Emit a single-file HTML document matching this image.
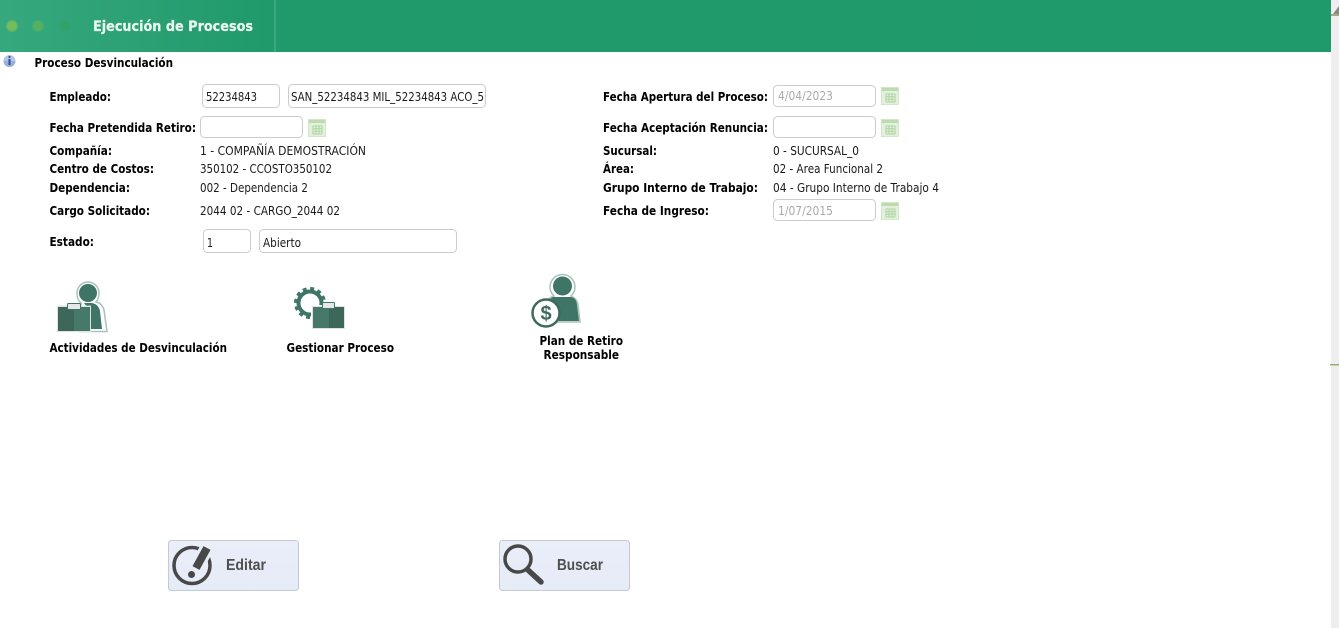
<!DOCTYPE html>
<html lang="es"><head><meta charset="utf-8"><title>Ejecución de Procesos</title>
<style>
html,body{margin:0;padding:0;background:#fff;width:1339px;height:628px;overflow:hidden}
svg{display:block}
text{font-family:"DejaVu Sans","Liberation Sans",sans-serif;font-size:12px;fill:#1a1a1a}
.b{font-weight:bold;fill:#000;font-size:12.5px}
.d{fill:#aaa}
.btn{font-family:"Liberation Sans",sans-serif;font-weight:bold;font-size:16px;fill:#4f4f4f}
.f{fill:#fff;stroke:#ccc;stroke-width:1}
</style></head><body>
<svg width="1339" height="628" viewBox="0 0 1339 628" xmlns="http://www.w3.org/2000/svg">
<defs>
<linearGradient id="h" x1="0" y1="0" x2="1" y2="0"><stop offset="0" stop-color="#37a87e"/><stop offset=".2" stop-color="#209a6b"/><stop offset="1" stop-color="#1f9a6b"/></linearGradient>
<linearGradient id="btn" x1="0" y1="0" x2="0" y2="1"><stop offset="0" stop-color="#e9eef9"/><stop offset="1" stop-color="#e6ebf8"/></linearGradient>
<filter id="soft" x="-50%" y="-50%" width="200%" height="200%"><feGaussianBlur stdDeviation="0.8"/></filter>
<g id="cal"><rect x="0.5" y="0.5" width="17" height="17" fill="#e3f0dc" stroke="#d2e6c8"/><rect x="1" y="1" width="16" height="3" fill="#bcdcb0"/><path d="M5 7h9v8H5zM5 9.700h9M5 12.300h9M8 7v8M11 7v8" fill="none" stroke="#aed4a2" stroke-width="1"/></g>
</defs>

<rect x="0" y="0" width="1331" height="52" fill="url(#h)"/>
<rect x="274" y="0" width="2" height="52" fill="#3aa981"/>
<g filter="url(#soft)">
<circle cx="12" cy="26" r="5.5" fill="#74bd5c"/>
<circle cx="38" cy="26" r="5.5" fill="#55b064"/>
<circle cx="65" cy="26" r="5.5" fill="#32a26b"/>
</g>
<text x="93" y="31" class="b" style="font-size:14.500px;fill:#eaf6f0;stroke:#eaf6f0;stroke-width:.25" textLength="160" lengthAdjust="spacingAndGlyphs">Ejecución de Procesos</text>

<rect x="1331" y="0" width="8" height="628" fill="#eeeeee"/>
<path d="M1333 14L1339 6V14z" fill="#888"/>
<rect x="1331" y="14" width="8" height="2" fill="#a6a888"/>
<rect x="1330" y="364" width="9" height="1.500" fill="#9aaa78"/>

<circle cx="9.500" cy="61" r="6" fill="#b4c6e4"/><path d="M3.500 61a6 6 0 0 0 12 0z" fill="#9ab0da"/><rect x="8.500" y="59" width="2" height="6" fill="#2b4f9e"/><circle cx="9.500" cy="57" r="1.100" fill="#2b4f9e"/>
<text x="34.500" y="67" class="b" textLength="138.500" lengthAdjust="spacingAndGlyphs">Proceso Desvinculación</text>

<text x="49.500" y="101" class="b" textLength="61.500" lengthAdjust="spacingAndGlyphs">Empleado:</text>
<rect x="202.500" y="84.500" width="77" height="23" rx="4" class="f"/>
<text x="206" y="101" textLength="51" lengthAdjust="spacingAndGlyphs">52234843</text>
<rect x="288.500" y="84.500" width="197" height="23" rx="4" class="f"/>
<text x="291" y="101" textLength="193" lengthAdjust="spacingAndGlyphs">SAN_52234843 MIL_52234843 ACO_5</text>

<text x="49.500" y="132" class="b" textLength="146.500" lengthAdjust="spacingAndGlyphs">Fecha Pretendida Retiro:</text>
<rect x="200.500" y="116.500" width="102" height="21" rx="4" class="f"/>
<use href="#cal" x="308" y="119"/>

<text x="49.500" y="155" class="b" textLength="62.500" lengthAdjust="spacingAndGlyphs">Compañía:</text>
<text x="200" y="155" textLength="166" lengthAdjust="spacingAndGlyphs">1 - COMPAÑÍA DEMOSTRACIÓN</text>
<text x="49.500" y="173" class="b" textLength="104.500" lengthAdjust="spacingAndGlyphs">Centro de Costos:</text>
<text x="200" y="173" textLength="132" lengthAdjust="spacingAndGlyphs">350102 - CCOSTO350102</text>
<text x="49.500" y="192" class="b" textLength="80.500" lengthAdjust="spacingAndGlyphs">Dependencia:</text>
<text x="200" y="192" textLength="108" lengthAdjust="spacingAndGlyphs">002 - Dependencia 2</text>
<text x="49.500" y="215" class="b" textLength="100.500" lengthAdjust="spacingAndGlyphs">Cargo Solicitado:</text>
<text x="200" y="215" textLength="140" lengthAdjust="spacingAndGlyphs">2044 02 - CARGO_2044 02</text>

<text x="49.500" y="246" class="b" textLength="44.500" lengthAdjust="spacingAndGlyphs">Estado:</text>
<rect x="203.500" y="229.500" width="47" height="23" rx="4" class="f"/>
<text x="207" y="247" textLength="6" lengthAdjust="spacingAndGlyphs">1</text>
<rect x="259.500" y="229.500" width="197" height="23" rx="4" class="f"/>
<text x="263" y="247" textLength="38" lengthAdjust="spacingAndGlyphs">Abierto</text>

<text x="603" y="101" class="b" textLength="165" lengthAdjust="spacingAndGlyphs">Fecha Apertura del Proceso:</text>
<rect x="773.500" y="85.500" width="102" height="21" rx="4" class="f"/>
<text x="778" y="100" class="d" textLength="55" lengthAdjust="spacingAndGlyphs">4/04/2023</text>
<use href="#cal" x="881" y="87"/>
<text x="603" y="132" class="b" textLength="165" lengthAdjust="spacingAndGlyphs">Fecha Aceptación Renuncia:</text>
<rect x="773.500" y="116.500" width="102" height="21" rx="4" class="f"/>
<use href="#cal" x="881" y="119"/>
<text x="603" y="155" class="b" textLength="54" lengthAdjust="spacingAndGlyphs">Sucursal:</text>
<text x="773" y="155" textLength="86" lengthAdjust="spacingAndGlyphs">0 - SUCURSAL_0</text>
<text x="603" y="173" class="b" textLength="31" lengthAdjust="spacingAndGlyphs">Área:</text>
<text x="773" y="173" textLength="110" lengthAdjust="spacingAndGlyphs">02 - Area Funcional 2</text>
<text x="603" y="192" class="b" textLength="155" lengthAdjust="spacingAndGlyphs">Grupo Interno de Trabajo:</text>
<text x="773" y="192" textLength="166" lengthAdjust="spacingAndGlyphs">04 - Grupo Interno de Trabajo 4</text>
<text x="603" y="215" class="b" textLength="106" lengthAdjust="spacingAndGlyphs">Fecha de Ingreso:</text>
<rect x="773.500" y="199.500" width="102" height="21" rx="4" class="f"/>
<text x="778" y="215" class="d" textLength="55" lengthAdjust="spacingAndGlyphs">1/07/2015</text>
<use href="#cal" x="881" y="202"/>

<!-- Actividades icon -->
<path d="M81 303c-3-2-4-6-4-10a11 11 0 0 1 22 0c0 4-1 7-3 9 5 1 7 4 8 8l3 21.500H80z" fill="#fff" stroke="#a9c2ba" stroke-width="1.500"/>
<circle cx="88" cy="293" r="9" fill="#3f7566"/>
<path d="M84 303h8c5 1 7 4 8 8l2 18H88V308z" fill="#3f7566"/>
<rect x="57" y="305.500" width="34" height="26.500" fill="#dfe4e2"/>
<rect x="58" y="307" width="16" height="24" fill="#3c6759"/>
<rect x="74" y="307" width="16" height="24" fill="#47796a"/>
<rect x="67.500" y="303.500" width="13" height="6" rx="1" fill="#e4e8e6" stroke="#3f7566"/>

<text x="49.500" y="352" class="b" textLength="177.500" lengthAdjust="spacingAndGlyphs">Actividades de Desvinculación</text>

<!-- Gestionar icon -->
<circle cx="310" cy="303" r="11.500" fill="none" stroke="#3f7566" stroke-width="4"/>
<circle cx="310" cy="303" r="14.500" fill="none" stroke="#3f7566" stroke-width="3" stroke-dasharray="4 3.600"/>
<rect x="311" y="305" width="34" height="24.500" fill="#fff"/>
<rect x="312" y="306" width="33" height="23" fill="#dfe4e2"/>
<rect x="313" y="307" width="16" height="21" fill="#47796a"/>
<rect x="329" y="307" width="15" height="21" fill="#3c6759"/>
<rect x="322.500" y="302.500" width="12" height="6" rx="1" fill="#e4e8e6" stroke="#3f7566"/>

<text x="286.500" y="352" class="b" textLength="107.500" lengthAdjust="spacingAndGlyphs">Gestionar Proceso</text>

<!-- Plan icon -->
<path d="M554 296c-3-3-4-6-4-9a12.500 12.500 0 0 1 25 0c0 3-1 6-4 9 4 2 6 4 7 8l2 18H540v-14c3-6 9-10 14-12z" fill="#fff" stroke="#a9c2ba" stroke-width="1.500"/>
<circle cx="562.500" cy="286" r="9.500" fill="#3f7566"/>
<path d="M553 297h18c4 1 5 3 6 7l2 17h-31l-1-14c0-5 2-8 6-10z" fill="#3f7566"/>
<circle cx="546" cy="313" r="13.500" fill="#fff" stroke="#3f6a5e" stroke-width="2.500"/>
<text x="546" y="320" text-anchor="middle" style="font-family:'Liberation Sans',sans-serif;font-weight:bold;font-size:20px;fill:#3f6a5e">$</text>

<text x="539.500" y="345" class="b" textLength="83.500" lengthAdjust="spacingAndGlyphs">Plan de Retiro</text>
<text x="543.500" y="359" class="b" textLength="75.500" lengthAdjust="spacingAndGlyphs">Responsable</text>

<!-- Editar -->
<rect x="168.500" y="540.500" width="130" height="50" rx="3" fill="url(#btn)" stroke="#c5c9d2"/>
<circle cx="192" cy="565.500" r="18" fill="none" stroke="#484848" stroke-width="3.500"/>
<path d="M207 548L196 568" stroke="#e8edf9" stroke-width="14"/>
<path d="M207 548L196 568" stroke="#484848" stroke-width="8"/>
<circle cx="191.500" cy="574.500" r="3.500" fill="#484848"/>
<text x="226" y="570" class="btn" textLength="40" lengthAdjust="spacingAndGlyphs">Editar</text>

<!-- Buscar -->
<rect x="499.500" y="540.500" width="130" height="50" rx="3" fill="url(#btn)" stroke="#c5c9d2"/>
<circle cx="518" cy="559" r="13" fill="none" stroke="#484848" stroke-width="3.500"/>
<path d="M528 570l13 12" stroke="#484848" stroke-width="5.500" stroke-linecap="round"/>
<text x="557" y="570" class="btn" textLength="46" lengthAdjust="spacingAndGlyphs">Buscar</text>
</svg>
</body></html>
